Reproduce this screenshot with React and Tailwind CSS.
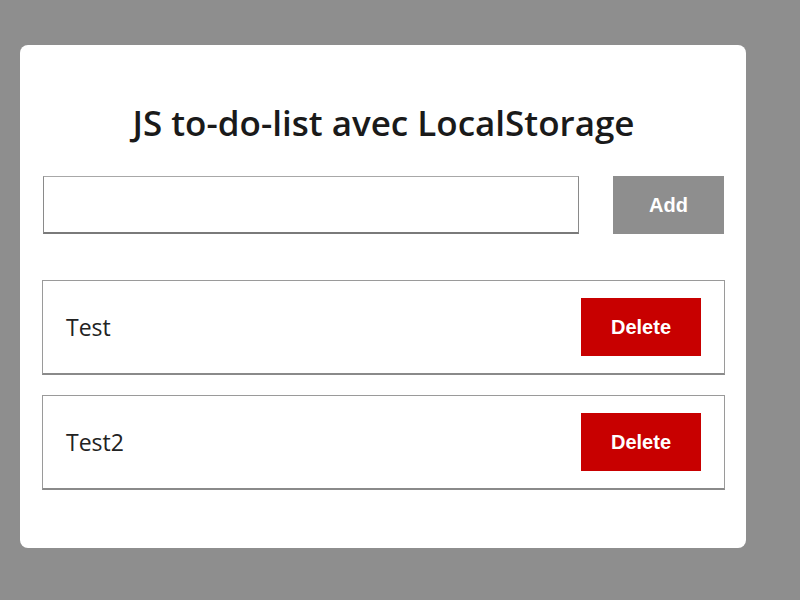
export default function App() {
  const items = ["Test", "Test2"];
  return (
    <div className="w-[800px] h-[600px] bg-[#8e8e8e] overflow-hidden pt-[45px] pl-[20px]">
      <div className="w-[726px] h-[503px] bg-white rounded-[8px] pl-[22px] pr-[21px] pt-[54px]" style={{ fontFamily: '"Open Sans", sans-serif' }}>
        <h1 className="text-[35px] leading-[48px] font-semibold text-center text-[#1a1a1a] m-0">JS to-do-list avec LocalStorage</h1>
        <div className="flex items-center mt-[29px]">
          <input
            className="ml-[1px] w-[536px] h-[58px] bg-white border border-[#8a8a8a] border-t-[#a8a8a8] border-b-2 border-b-[#7a7a7a] outline-none"
            type="text"
          />
          <button
            className="ml-auto mr-[1px] w-[111px] h-[58px] bg-[#8e8e8e] text-white text-[20px] font-bold"
            style={{ fontFamily: '"Liberation Sans", Arial, sans-serif' }}
          >
            Add
          </button>
        </div>
        <div className="mt-[46px] flex flex-col gap-[20px]">
          {items.map((t) => (
            <div
              key={t}
              className="flex items-center justify-between border border-[#9a9a9a] border-b-2 border-b-[#8a8a8a] pl-[23px] pr-[23px] pt-[17px] pb-[17px]"
            >
              <span className="text-[23px] text-[#222]">{t}</span>
              <button
                className="w-[120px] h-[58px] bg-[#c80000] text-white text-[20px] font-bold"
                style={{ fontFamily: '"Liberation Sans", Arial, sans-serif' }}
              >
                Delete
              </button>
            </div>
          ))}
        </div>
      </div>
    </div>
  );
}
